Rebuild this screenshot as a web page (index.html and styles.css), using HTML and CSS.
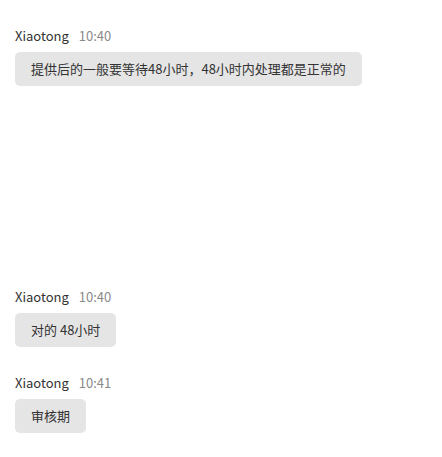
FILE: index.html
```html
<!DOCTYPE html>
<html lang="en">

<head>
    <meta charset="UTF-8">
    <meta name="viewport" content="width=device-width, initial-scale=1.0">
    <title>Chat</title>

    <link rel="stylesheet" href="styles.css">
</head>

<body>

    <div class="chat">
        <div class="message first">
            <div class="meta">
                <span class="name">Xiaotong</span>
                <span class="time">10:40</span>
            </div>
            <div class="bubble">提供后的一般要等待48小时，48小时内处理都是正常的</div>
        </div>

        <div class="message">
            <div class="meta">
                <span class="name">Xiaotong</span>
                <span class="time">10:40</span>
            </div>
            <div class="bubble">对的 48小时</div>
        </div>

        <div class="message">
            <div class="meta">
                <span class="name">Xiaotong</span>
                <span class="time">10:41</span>
            </div>
            <div class="bubble">审核期</div>
        </div>
    </div>

</body>

</html>
```

FILE: styles.css
```css
body {
    font-family: "Noto Sans CJK SC", "Noto Sans", sans-serif;
    background-color: #ffffff;
    color: #333333;
    margin: 0;
}

.chat {
    display: flex;
    flex-direction: column;
    align-items: flex-start;
    padding: 26px 15px 0 15px;
    gap: 26px;
}

.message {
    display: flex;
    flex-direction: column;
    align-items: flex-start;
}

.message.first {
    margin-bottom: 175px;
}

.meta {
    font-size: 13px;
    line-height: 20px;
    margin-bottom: 6px;
}

.name {
    color: #333333;
    margin-right: 7px;
}

.time {
    color: #8a8a8a;
}

.bubble {
    background-color: #e5e5e5;
    border-radius: 5px;
    font-size: 13px;
    line-height: 20px;
    padding: 7px 16px 7px 16px;
}
```
